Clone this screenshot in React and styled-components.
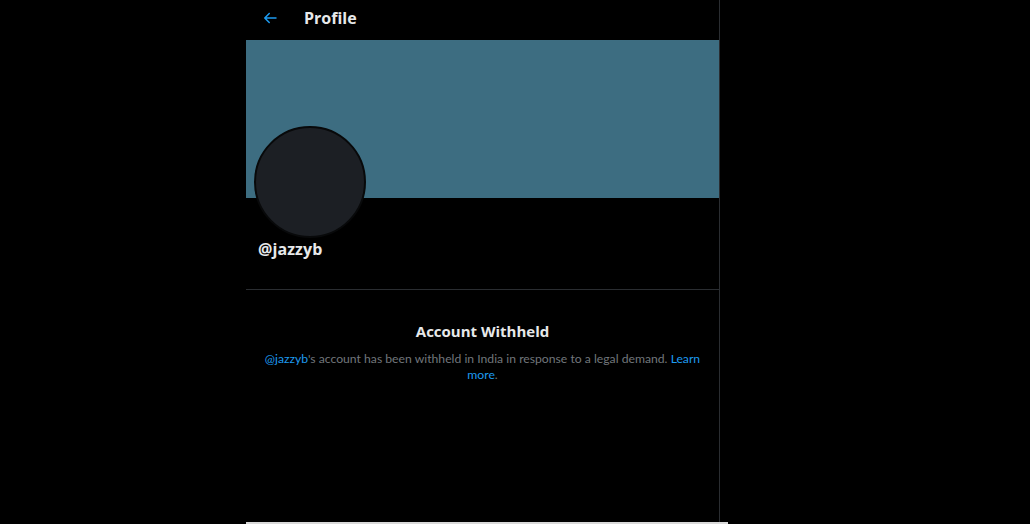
import React from "react";
import styled, { createGlobalStyle } from "styled-components";

const Global = createGlobalStyle`
  html, body { margin: 0; padding: 0; background: #000; }
  body { font-family: "Open Sans", "Noto Sans", sans-serif; overflow: hidden; }
`;

const Page = styled.div`
  width: 1030px;
  height: 524px;
  background: #000;
  display: flex;
  flex-direction: column;
`;

const Row = styled.div`
  flex: 1;
  display: flex;
  padding-left: 246px;
  min-height: 0;
`;

const Column = styled.main`
  width: 473px;
  border-right: 1px solid #2a2d31;
  display: flex;
  flex-direction: column;
`;

const BottomStrip = styled.div`
  height: 2px;
  margin-left: 246px;
  width: 482px;
  background: #d9d9d9;
`;

const Header = styled.header`
  height: 40px;
  display: flex;
  align-items: center;
  gap: 25px;
  padding: 0 0 4px 15px;
  box-sizing: border-box;
`;

const Title = styled.h1`
  margin: 0;
  font-size: 16px;
  font-weight: 700;
  color: #e7e9ea;
`;

const Banner = styled.div`
  height: 158px;
  background: #3d6d81;
`;

const ProfileInfo = styled.section`
  position: relative;
  height: 92px;
  border-bottom: 1px solid #2a2d31;
  padding: 40px 12px 0;
  box-sizing: border-box;
`;

const Avatar = styled.div`
  position: absolute;
  left: 8px;
  top: -72px;
  width: 108px;
  height: 108px;
  border-radius: 50%;
  background: #1c1f24;
  border: 2px solid #08090a;
`;

const Handle = styled.div`
  font-size: 16px;
  font-weight: 700;
  color: #e7e9ea;
  letter-spacing: 0.1px;
`;

const Notice = styled.section`
  padding: 31px 14px 0;
  text-align: center;
`;

const NoticeTitle = styled.h2`
  margin: 0 0 10px;
  font-size: 15px;
  font-weight: 700;
  color: #e7e9ea;
`;

const NoticeText = styled.p`
  margin: 0;
  font-family: Lato, "Open Sans", sans-serif;
  font-size: 12.2px;
  line-height: 16px;
  color: #71767b;
`;

const Link = styled.a`
  color: #1d9bf0;
  text-decoration: none;
`;

export default function App() {
  return (
    <>
      <Global />
      <Page>
        <Row>
          <Column>
            <Header>
              <svg width="18" height="18" viewBox="0 0 24 24" aria-hidden="true">
                <path
                  fill="#1d9bf0"
                  d="M20 11H7.414l4.293-4.293c.39-.39.39-1.023 0-1.414s-1.023-.39-1.414 0l-6 6c-.39.39-.39 1.023 0 1.414l6 6c.195.195.45.293.707.293s.512-.098.707-.293c.39-.39.39-1.023 0-1.414L7.414 13H20c.553 0 1-.447 1-1s-.447-1-1-1z"
                />
              </svg>
              <Title>Profile</Title>
            </Header>
            <Banner />
            <ProfileInfo>
              <Avatar />
              <Handle>@jazzyb</Handle>
            </ProfileInfo>
            <Notice>
              <NoticeTitle>Account Withheld</NoticeTitle>
              <NoticeText>
                <Link>@jazzyb</Link>'s account has been withheld in India in response to a legal demand.{" "}
                <Link>Learn</Link> <Link>more</Link>.
              </NoticeText>
            </Notice>
          </Column>
        </Row>
        <BottomStrip />
      </Page>
    </>
  );
}
